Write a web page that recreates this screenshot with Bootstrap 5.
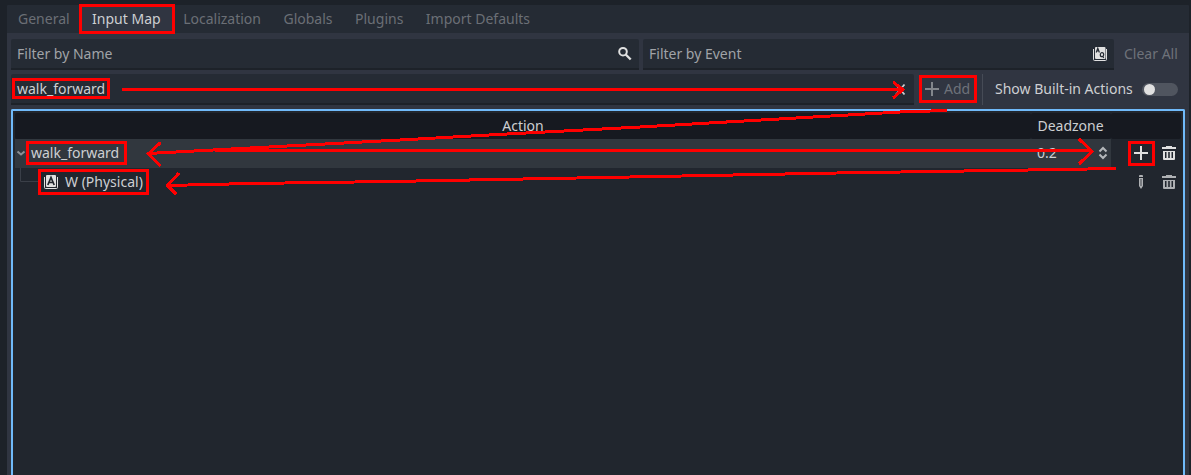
<!DOCTYPE html>
<html lang="en">
<head>
<meta charset="utf-8">
<meta name="viewport" content="width=device-width, initial-scale=1">
<title>Project Settings - Input Map</title>
<link href="https://cdn.jsdelivr.net/npm/bootstrap@5.3.0/dist/css/bootstrap.min.css" rel="stylesheet">
<style>
body{background:#1d2229;color:#cdcfd2;font:14px/20px "Noto Sans",sans-serif;height:475px}
svg{display:block;flex:none}
.panel{margin:5px 2px 0 7px;height:470px;background:#303541;border-radius:2px 2px 0 0}
.tabs{height:28px;background:#252b34;border-radius:2px 2px 0 0}
.tabs .nav-link{color:#6b6f76;padding:4px 11px;height:28px;line-height:20px;white-space:nowrap;border-radius:0}
.tabs .nav-link + .nav-link{padding-left:11.5px}
.tabs .nav-link.active{background:#303541;color:#cdcfd2}
.page{padding:6px 4px 0}
.field{height:31px;background:#252b34;border-bottom:2px solid #1d2229;border-radius:2px 2px 0 0;padding:0 6px}
.hint{color:#a0a3a7}
.dim{color:#6e727a}
.sep{width:1px;height:31px;background:#464b56}
.toggle{width:36px;height:13px;border-radius:7px;background:#50555f;padding:1px 2px}
.knob{width:11px;height:11px;border-radius:50%;background:#e0e0e0}
.tree{height:366px;margin-top:4px;border:2px solid #70bafa;border-bottom:0;background:#21262e;border-radius:2px 2px 0 0;padding:2px 2px 0}
.head-row > div{height:26px;line-height:26px;background:#161920;border-radius:2px}
.tree-row{height:29px}
.tree-row > div{padding-bottom:1px}
.sel{background:#31373e}
.c1{width:1016px}.c2{width:80px}.c3{width:70px}
.leaf{width:25px;height:29px}
.notes{left:0;top:0;pointer-events:none}
</style>
</head>
<body class="overflow-hidden position-relative">
<div class="panel">
  <nav class="nav tabs flex-nowrap">
    <a class="nav-link">General</a>
    <a class="nav-link active">Input Map</a>
    <a class="nav-link">Localization</a>
    <a class="nav-link">Globals</a>
    <a class="nav-link">Plugins</a>
    <a class="nav-link">Import Defaults</a>
  </nav>
  <div class="page d-flex flex-column">
    <div class="d-flex gap-1">
      <div class="field d-flex align-items-center justify-content-between hint" style="width:628px">Filter by Name
        <svg width="16" height="16" viewBox="0 0 16 16" fill="none" stroke="#e0e0e0" stroke-width="2"><circle cx="6" cy="5.700" r="3.800"/><path d="M8.700 8.500l5 5" stroke-width="2.4"/></svg>
      </div>
      <div class="field d-flex align-items-center justify-content-between hint" style="width:471px">Filter by Event
        <svg width="16" height="16" viewBox="0 0 16 16"><path d="M1.500 3v10.500a1 1 0 0 0 1 1h11a1 1 0 0 0 1-1V3" fill="none" stroke="#e0e0e0"/><rect x="3" y="1" width="10.500" height="12" rx="1" fill="#e0e0e0"/><path d="M4.200 6.500l1.600-4.200L7.400 6.500M4.800 5h2M11.800 12l-1.600-2" fill="none" stroke="#252b34" stroke-width="1.200"/><ellipse cx="10" cy="8.700" rx="1.700" ry="2" fill="none" stroke="#252b34" stroke-width="1.200"/></svg>
      </div>
      <div class="dim d-flex align-items-center text-nowrap" style="padding:0 0 2px 6px;height:31px">Clear All</div>
    </div>
    <div class="d-flex mt-1">
      <div class="field d-flex align-items-center justify-content-between" style="width:903px">walk_forward
        <svg width="16" height="16" viewBox="0 0 16 16" fill="none" stroke="#cdcfd2" stroke-width="1.800"><path d="M4 3.500l8.500 10M12.500 3.500L4 13.500"/></svg>
      </div>
      <div class="dim d-flex align-items-center" style="height:30px;width:68px;padding-left:10px">
        <svg width="16" height="16" viewBox="0 0 16 16" fill="none" stroke="#82868c" stroke-width="2"><path d="M8 1v14M1 8h14"/></svg><span style="margin-left:4px">Add</span>
      </div>
      <div class="sep"></div>
      <div class="d-flex align-items-center text-nowrap" style="height:30px;margin-left:12px">Show Built-in Actions
        <div class="toggle" style="margin-left:9px"><div class="knob"></div></div>
      </div>
    </div>
    <div class="tree">
      <div class="head-row d-flex text-center">
        <div class="c1">Action</div><div class="c2" style="padding-right:1px">Deadzone</div><div class="c3"></div>
      </div>
      <div class="tree-row d-flex">
        <div class="c1 sel d-flex align-items-center">
          <svg width="12" height="12" viewBox="0 0 12 12" fill="none" stroke="#8b8f94" stroke-width="2"><path d="M2.500 4.500L6 7.500l3.500-3"/></svg><span style="margin-left:4px">walk_forward</span>
        </div>
        <div class="c2 sel d-flex align-items-center" style="padding-left:6px">0.2
          <svg class="ms-auto" width="16" height="16" viewBox="0 0 16 16" fill="none" stroke="#b4b7ba" stroke-width="2"><path d="M4.500 6.500L8 3l3.500 3.500M4.500 9.500L8 13l3.500-3.500"/></svg>
        </div>
        <div class="c3 d-flex align-items-center" style="padding-left:22px">
          <svg width="16" height="16" viewBox="0 0 16 16" fill="none" stroke="#e0e0e0" stroke-width="2"><path d="M8 1v14M1 8h14"/></svg>
          <svg style="margin-left:12px" width="16" height="16" viewBox="0 0 16 16" fill="#e0e0e0"><path d="M5 1h6v1h4v2H1V2h4zM2 6h12v8a1 1 0 0 1-1 1H3a1 1 0 0 1-1-1zM4 7v6h1.500V7zm3.200 0v6h1.600V7zm3.300 0v6H12V7z" fill-rule="evenodd"/></svg>
        </div>
      </div>
      <div class="tree-row d-flex">
        <div class="c1 d-flex align-items-center">
          <svg class="leaf" viewBox="0 0 25 29" fill="none" stroke="#3a3f48"><path d="M5.500 0v13.500H24"/></svg>
          <svg style="margin-left:3px" width="16" height="16" viewBox="0 0 16 16"><path d="M1.500 3v10.500a1 1 0 0 0 1 1h11a1 1 0 0 0 1-1V3" fill="none" stroke="#e0e0e0"/><rect x="3" y="1" width="10" height="12" rx="1" fill="#e0e0e0"/><path d="M4.800 11L8 3.500l3.200 7.500M6 8.500h4" fill="none" stroke="#21262e" stroke-width="1.700"/></svg>
          <span style="margin-left:6px">W (Physical)</span>
        </div>
        <div class="c2"></div>
        <div class="c3 d-flex align-items-center" style="padding-left:22px">
          <svg width="16" height="16" viewBox="0 0 16 16" fill="#aeb0b3"><path d="M6 2a1 1 0 0 1 1-1h2a1 1 0 0 1 1 1v1H6zM6 4h4v8l-2 3-2-3z"/><path d="M7.500 5h1v7h-1z" fill="#444950"/></svg>
          <svg style="margin-left:12px" width="16" height="16" viewBox="0 0 16 16" fill="#aeb0b3"><path d="M5 1h6v1h4v2H1V2h4zM2 6h12v8a1 1 0 0 1-1 1H3a1 1 0 0 1-1-1zM4 7v6h1.500V7zm3.200 0v6h1.600V7zm3.300 0v6H12V7z" fill-rule="evenodd"/></svg>
        </div>
      </div>
    </div>
  </div>
</div>
<!-- tutorial annotations drawn over the interface -->
<svg class="notes position-absolute" width="1191" height="475" fill="none" stroke="#f00" stroke-width="3" shape-rendering="crispEdges">
  <path d="M80.500 5.500h93v27h-93zM13.500 79.500h95v18h-95zM920.500 76.500h55v25h-55zM27.500 142.500h98v21h-98zM39.500 170.500h108v23h-108zM1129.500 142.500h24v22h-24z"/>
  <path d="M122 89.500H903M893 82l10 7.500L893 98" stroke-linejoin="round"/>
  <path d="M946 110.500L900 112 640 127 507 134 400 140 250 148 148 153.500M160 143l-11.500 11 11 11" stroke-linejoin="round" stroke-linecap="round"/>
  <path d="M215 150.500H1092M1079 139l13 12.500-13 12.500" stroke-linejoin="round"/>
  <path d="M1116 168.500L1060 169.500 837 173 630 177 390 181.500 250 183.500 167 185.500M179 173l-11.500 12.500 9 9" stroke-linejoin="round"/>
</svg>
<script src="https://cdn.jsdelivr.net/npm/bootstrap@5.3.0/dist/js/bootstrap.bundle.min.js"></script>
</body>
</html>
